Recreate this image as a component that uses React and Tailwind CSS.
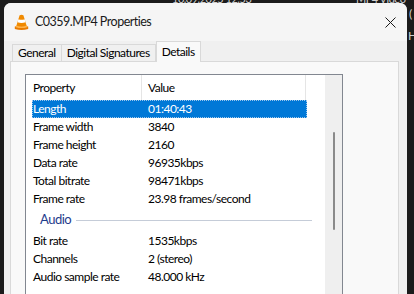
import React from "react";

const rows1 = [
  ["Length", "01:40:43", true],
  ["Frame width", "3840"],
  ["Frame height", "2160"],
  ["Data rate", "96935kbps"],
  ["Total bitrate", "98471kbps"],
  ["Frame rate", "23.98 frames/second"],
];
const rows2 = [
  ["Bit rate", "1535kbps"],
  ["Channels", "2 (stereo)"],
  ["Audio sample rate", "48.000 kHz"],
];

function Row({ name, value, selected }) {
  return (
    <div className="flex h-[18px] items-center pl-[6px]">
      <div
        className={
          "flex h-[18px] w-[275px] items-center " +
          (selected
            ? "bg-[#0078d7] text-white outline-1 outline-dotted outline-[#9cc6ec] -outline-offset-1"
            : "text-black")
        }
      >
        <div className="w-[110px] pl-px">{name}</div>
        <div className="pl-[6px]">{value}</div>
      </div>
    </div>
  );
}

function VlcIcon() {
  return (
    <svg width="15" height="17" viewBox="0 0 15 17">
      <path d="M5.6 1.2 Q7.5 0.4 9.4 1.2 L13 13 L2 13 Z" fill="#f08a00" />
      <path d="M4.4 5.2 Q7.5 6.4 10.6 5.2 L11.5 8.2 Q7.5 9.6 3.5 8.2 Z" fill="#ffffff" />
      <path d="M0.8 12.6 Q7.5 11 14.2 12.6 L14.2 15 Q7.5 16.8 0.8 15 Z" fill="#e87a00" />
      <path d="M2.2 11.6 Q7.5 13.6 12.8 11.6 L13.2 13.2 Q7.5 15 1.8 13.2 Z" fill="#ffb347" />
    </svg>
  );
}

export default function App() {
  return (
    <div
      className="relative h-[294px] w-[414px] overflow-hidden bg-[#1b1b1b] text-[12px] tracking-[-0.5px]"
      style={{ fontFamily: 'Lato, "Noto Sans", sans-serif' }}
    >
      {/* desktop / explorer text behind */}
      <div className="absolute left-[172px] top-[-9px] text-[11px] text-[#cfcfcf]">10.09.2025 12:53</div>
      <div className="absolute left-[356px] top-[-9px] text-[11px] text-[#cfcfcf]">MP4 Video File</div>
      <div className="absolute left-[409px] top-[5px] text-[12px] text-[#cfcfcf]">(</div>
      <div className="absolute left-[408px] top-[27px] text-[12px] text-[#cfcfcf]">H</div>
      <div className="absolute left-[-3px] top-[25px] text-[12px] text-[#cfcfcf]">)</div>

      {/* window */}
      <div className="absolute left-[4px] top-[3px] flex h-[320px] w-[403px] flex-col rounded-t-[7px] bg-[#f0f0f0]">
        {/* title bar */}
        <div className="flex h-[38px] items-center rounded-t-[7px] bg-[#f5f5f5] pl-[10px] pr-[10px]">
          <VlcIcon />
          <div className="ml-[6px] mt-px text-[12.5px] text-[#1a1a1a]">C0359.MP4 Properties</div>
          <div className="ml-auto mr-[1px] flex h-[12px] w-[12px] items-center justify-center">
            <svg width="11" height="11" viewBox="0 0 11 11">
              <path d="M0.5 0.5 L10.5 10.5 M10.5 0.5 L0.5 10.5" stroke="#1a1a1a" strokeWidth="1" />
            </svg>
          </div>
        </div>

        {/* tabs */}
        <div className="flex h-[20px] items-end pl-[8px]">
          <div className="flex h-[17px] items-center border border-b-0 border-[#d9d9d9] bg-[#f0f0f0] px-[5px] text-black">
            General
          </div>
          <div className="flex h-[17px] items-center border border-b-0 border-l-0 border-[#d9d9d9] bg-[#f0f0f0] px-[5px] text-black">
            Digital Signatures
          </div>
          <div className="relative top-px flex h-[21px] items-center border border-b-0 border-[#d9d9d9] bg-[#f9f9f9] px-[5px] text-black">
            Details
          </div>
        </div>

        {/* panel */}
        <div className="ml-[6px] mr-[8px] flex-1 border border-[#d9d9d9] bg-[#f9f9f9] pl-[14px] pt-[12px]">
          <div className="flex h-[230px] w-[318px] border border-[#828790] bg-white">
            <div className="flex-1">
              {/* header */}
              <div className="flex h-[25px] items-center">
                <div className="flex h-full w-[116px] items-center border-r border-[#e5e5e5] pl-[7px] text-black">
                  Property
                </div>
                <div className="flex h-full w-[164px] items-center border-r border-[#e5e5e5] pl-[6px] text-black">
                  Value
                </div>
              </div>
              {rows1.map(([n, v, s]) => (
                <Row key={n} name={n} value={v} selected={s} />
              ))}
              <div className="flex h-[24px] items-center pl-[14px]">
                <span className="text-[13px] text-[#1e3c8c]">Audio</span>
                <div className="ml-[5px] mt-px h-px w-[236px] bg-[#c5ccd8]" />
              </div>
              {rows2.map(([n, v]) => (
                <Row key={n} name={n} value={v} />
              ))}
            </div>
            {/* scrollbar */}
            <div className="flex w-[17px] justify-center bg-[#efefef] pt-[57px]">
              <div className="h-[98px] w-[2px] rounded-full bg-[#8a8a8a]" />
            </div>
          </div>
        </div>
      </div>
    </div>
  );
}
